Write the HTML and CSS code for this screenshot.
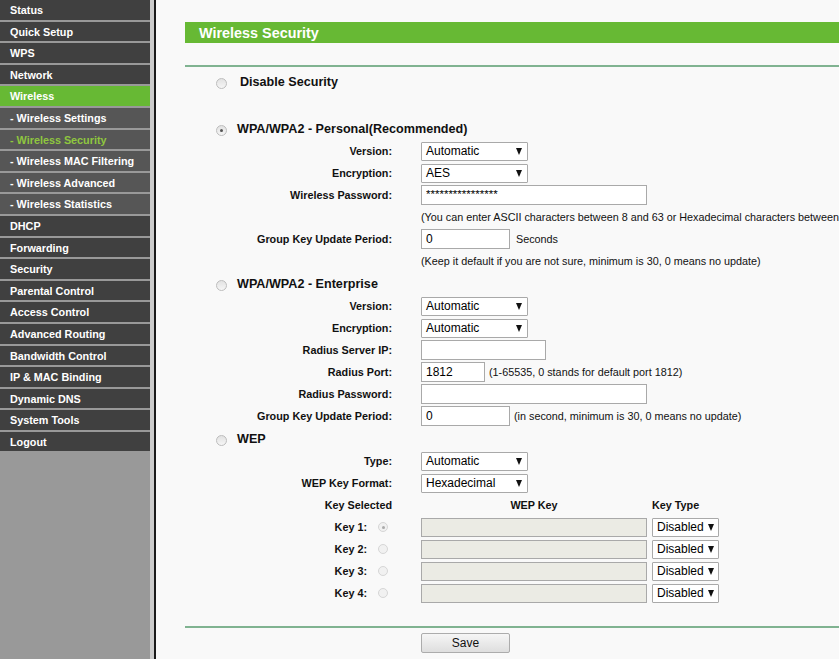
FILE: index.html
```html
<!DOCTYPE html>
<html lang="en">
<head>
    <meta charset="UTF-8">
    <title>Wireless Security</title>
    <link rel="stylesheet" href="styles.css">
</head>
<body>

    <!-- Left menu -->
    <div class="sidebar">
        <a class="menu-item">Status</a>
        <a class="menu-item">Quick Setup</a>
        <a class="menu-item">WPS</a>
        <a class="menu-item">Network</a>
        <a class="menu-item active">Wireless</a>
        <a class="menu-item sub">- Wireless Settings</a>
        <a class="menu-item sub current">- Wireless Security</a>
        <a class="menu-item sub">- Wireless MAC Filtering</a>
        <a class="menu-item sub">- Wireless Advanced</a>
        <a class="menu-item sub">- Wireless Statistics</a>
        <a class="menu-item">DHCP</a>
        <a class="menu-item">Forwarding</a>
        <a class="menu-item">Security</a>
        <a class="menu-item">Parental Control</a>
        <a class="menu-item">Access Control</a>
        <a class="menu-item">Advanced Routing</a>
        <a class="menu-item">Bandwidth Control</a>
        <a class="menu-item">IP &amp; MAC Binding</a>
        <a class="menu-item">Dynamic DNS</a>
        <a class="menu-item">System Tools</a>
        <a class="menu-item">Logout</a>
    </div>
    <div class="divider"></div>

    <!-- Main frame -->
    <div class="main">
        <div class="page">
            <div class="title-bar">Wireless Security</div>
            <div class="rule"></div>

            <div class="mode first">
                <span class="radio"></span>
                <span class="mode-name wide">Disable Security</span>
            </div>

            <!-- WPA/WPA2 Personal -->
            <div class="mode">
                <span class="radio checked"></span>
                <span class="mode-name">WPA/WPA2 - Personal(Recommended)</span>
            </div>
            <div class="form-row">
                <label>Version:</label>
                <div class="field"><div class="select w107"><span>Automatic</span><i class="caret"></i></div></div>
            </div>
            <div class="form-row">
                <label>Encryption:</label>
                <div class="field"><div class="select w107"><span>AES</span><i class="caret"></i></div></div>
            </div>
            <div class="form-row">
                <label>Wireless Password:</label>
                <div class="field"><input class="text w226 stars" type="text" value="****************"></div>
            </div>
            <div class="form-row">
                <label></label>
                <div class="field hint">(You can enter ASCII characters between 8 and 63 or Hexadecimal characters between 8 and 64.)</div>
            </div>
            <div class="form-row">
                <label>Group Key Update Period:</label>
                <div class="field"><input class="text w89" type="text" value="0"><span class="after">Seconds</span></div>
            </div>
            <div class="form-row">
                <label></label>
                <div class="field hint">(Keep it default if you are not sure, minimum is 30, 0 means no update)</div>
            </div>

            <!-- WPA/WPA2 Enterprise -->
            <div class="mode">
                <span class="radio"></span>
                <span class="mode-name">WPA/WPA2 - Enterprise</span>
            </div>
            <div class="form-row">
                <label>Version:</label>
                <div class="field"><div class="select w107"><span>Automatic</span><i class="caret"></i></div></div>
            </div>
            <div class="form-row">
                <label>Encryption:</label>
                <div class="field"><div class="select w107"><span>Automatic</span><i class="caret"></i></div></div>
            </div>
            <div class="form-row">
                <label>Radius Server IP:</label>
                <div class="field"><input class="text w125" type="text" value=""></div>
            </div>
            <div class="form-row">
                <label>Radius Port:</label>
                <div class="field"><input class="text w64" type="text" value="1812"><span class="after small">(1-65535, 0 stands for default port 1812)</span></div>
            </div>
            <div class="form-row">
                <label>Radius Password:</label>
                <div class="field"><input class="text w226" type="text" value=""></div>
            </div>
            <div class="form-row">
                <label>Group Key Update Period:</label>
                <div class="field"><input class="text w89" type="text" value="0"><span class="after small">(in second, minimum is 30, 0 means no update)</span></div>
            </div>

            <!-- WEP -->
            <div class="mode">
                <span class="radio"></span>
                <span class="mode-name">WEP</span>
            </div>
            <div class="form-row wep-top">
                <label>Type:</label>
                <div class="field"><div class="select w107"><span>Automatic</span><i class="caret"></i></div></div>
            </div>
            <div class="form-row">
                <label>WEP Key Format:</label>
                <div class="field"><div class="select w107"><span>Hexadecimal</span><i class="caret"></i></div></div>
            </div>
            <div class="form-row">
                <label>Key Selected</label>
                <div class="field">
                    <span class="col-head key-col">WEP Key</span>
                    <span class="col-head">Key Type</span>
                </div>
            </div>
            <div class="form-row">
                <label class="key-label">Key 1: <span class="radio small checked disabled"></span></label>
                <div class="field"><input class="text w226 off" type="text" disabled><div class="select w67"><span>Disabled</span><i class="caret"></i></div></div>
            </div>
            <div class="form-row">
                <label class="key-label">Key 2: <span class="radio small disabled"></span></label>
                <div class="field"><input class="text w226 off" type="text" disabled><div class="select w67"><span>Disabled</span><i class="caret"></i></div></div>
            </div>
            <div class="form-row">
                <label class="key-label">Key 3: <span class="radio small disabled"></span></label>
                <div class="field"><input class="text w226 off" type="text" disabled><div class="select w67"><span>Disabled</span><i class="caret"></i></div></div>
            </div>
            <div class="form-row">
                <label class="key-label">Key 4: <span class="radio small disabled"></span></label>
                <div class="field"><input class="text w226 off" type="text" disabled><div class="select w67"><span>Disabled</span><i class="caret"></i></div></div>
            </div>

            <div class="rule bottom"></div>
            <div class="buttons">
                <button class="btn-save">Save</button>
            </div>
        </div>
    </div>

</body>
</html>
```

FILE: styles.css
```css
body {
    font-family: Arial, "Liberation Sans", sans-serif;
    margin: 0;
    padding: 0;
    display: flex;
    height: 659px;
    overflow: hidden;
    background-color: #f9f9f9;
    color: #000;
}
/* Left menu */
.sidebar {
    width: 150px;
    flex-shrink: 0;
    background-color: #999;
}
.menu-item {
    display: block;
    height: 19.6px;
    line-height: 21.4px;
    overflow: hidden;
    margin-bottom: 2px;
    padding-left: 10px;
    background-color: #404040;
    color: #fff;
    font-size: 10.8px;
    font-weight: bold;
    white-space: nowrap;
}
.menu-item.sub {
    background-color: #565656;
}
.menu-item.active {
    background-color: #67b934;
}
.menu-item.current {
    color: #8fc63f;
}
.divider {
    width: 4px;
    flex-shrink: 0;
    background-color: #cbcbcb;
    border-right: 2px solid #1a1a1a;
}
/* Main frame */
.main {
    flex: 1;
    overflow: hidden;
    background-color: #f9f9f9;
}
.page {
    width: 700px;
    padding: 22px 0 0 29px;
}
.title-bar {
    height: 21px;
    line-height: 22px;
    padding-left: 14px;
    background-color: #67b934;
    color: #fff;
    font-size: 14.4px;
    font-weight: bold;
}
.rule {
    height: 2px;
    margin-top: 22px;
    background-color: #80b391;
}
.rule.bottom {
    margin-top: 22px;
}
.mode {
    display: flex;
    align-items: center;
    height: 23px;
    padding-left: 31px;
}
.mode.first {
    height: 22px;
    margin-top: 4px;
    margin-bottom: 24px;
}
.mode-name {
    margin-left: 10px;
    font-size: 12.6px;
    font-weight: bold;
    color: #111;
}
.mode-name.wide {
    margin-left: 13px;
}
.radio {
    display: inline-block;
    width: 11px;
    height: 11px;
    margin-top: 3px;
    border: 1px solid #bdbdbd;
    border-radius: 50%;
    background: linear-gradient(#e2e2e2, #f6f6f6);
    box-sizing: border-box;
    position: relative;
}
.radio.checked::after {
    content: "";
    position: absolute;
    left: 3px;
    top: 3px;
    width: 3px;
    height: 3px;
    border-radius: 50%;
    background-color: #555;
}
.radio.small {
    width: 10px;
    height: 10px;
    margin: 0 0 0 8px;
    vertical-align: -1px;
}
.radio.small.checked::after {
    left: 2.5px;
    top: 2.5px;
}
.radio.disabled {
    border-color: #d6d6d6;
    background: #f1f1f1;
}
.radio.disabled.checked::after {
    background-color: #aaa;
}
.form-row {
    display: flex;
    align-items: center;
    height: 22px;
}
.form-row label {
    width: 207px;
    flex-shrink: 0;
    padding-right: 29px;
    text-align: right;
    font-size: 10.8px;
    font-weight: bold;
    color: #111;
    white-space: nowrap;
}
.form-row label.key-label {
    width: 203px;
    padding-right: 33px;
}
.field {
    display: flex;
    align-items: center;
    white-space: nowrap;
}
.hint {
    font-size: 10.8px;
    color: #111;
}
.after {
    margin-left: 6px;
    font-size: 10.8px;
    color: #111;
}
.after.small {
    margin-left: 4px;
}
.select {
    display: flex;
    align-items: center;
    justify-content: space-between;
    height: 19px;
    padding: 0 5px 0 4px;
    box-sizing: border-box;
    border: 1px solid #a9a9a9;
    border-radius: 1px;
    background-color: #fff;
    font-size: 12px;
}
.caret {
    width: 0;
    height: 0;
    border-left: 3.5px solid transparent;
    border-right: 3.5px solid transparent;
    border-top: 7px solid #111;
}
.w107 { width: 107px; }
.w67 { width: 67px; margin-left: 5px; padding-right: 4px; }
.w226 { width: 226px; }
.w125 { width: 125px; }
.w89 { width: 89px; }
.w64 { width: 64px; }
input.text {
    height: 20px;
    margin: 0;
    padding: 0 4px;
    box-sizing: border-box;
    border: 1px solid #a9a9a9;
    background-color: #fff;
    font-family: Arial, "Liberation Sans", sans-serif;
    font-size: 12px;
    color: #000;
    outline: none;
}
input.stars {
    font-size: 11.5px;
    padding-bottom: 2px;
}
input.off {
    height: 19px;
    background-color: #ebebe4;
}
.col-head {
    font-size: 10.8px;
    font-weight: bold;
    color: #111;
}
.col-head.key-col {
    width: 226px;
    margin-right: 5px;
    text-align: center;
}
.buttons {
    padding: 5px 0 0 236px;
}
.btn-save {
    width: 89px;
    height: 20px;
    border: 1px solid #acacac;
    border-radius: 2px;
    background: linear-gradient(#f6f6f6, #dedede);
    font-family: Arial, "Liberation Sans", sans-serif;
    font-size: 12px;
    color: #111;
    cursor: pointer;
}
```
